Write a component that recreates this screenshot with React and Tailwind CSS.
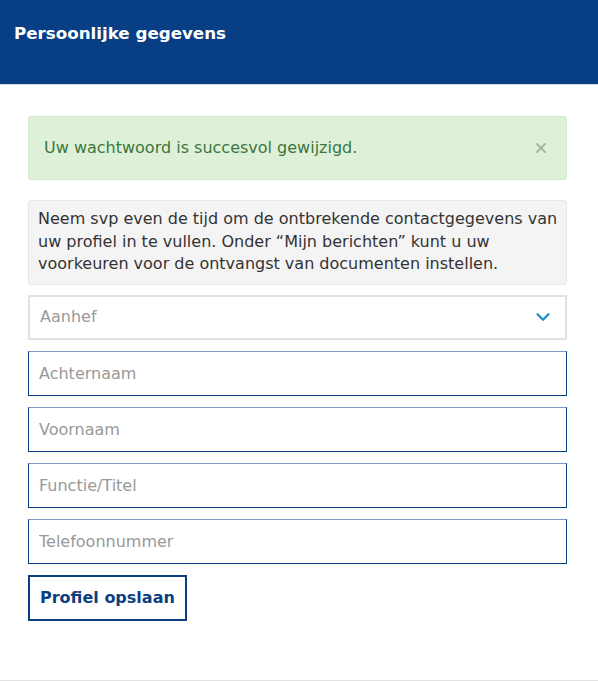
import { ChevronDown, X } from 'lucide-react';

const fields = ['Achternaam', 'Voornaam', 'Functie/Titel', 'Telefoonnummer'];

export default function App() {
  return (
    <div className="min-h-[681px] flex flex-col bg-white font-['DejaVu_Sans',Verdana,sans-serif] border-b border-[#e2e2e2]">
      {/* Header */}
      <header className="h-[85px] bg-[#083f84] border-b border-[#d6dde8] px-[14px] pt-[21px]">
        <h1 className="text-white text-[16.7px] font-bold">Persoonlijke gegevens</h1>
      </header>

      <main className="ml-[28px] w-[539px] pt-[31px] flex flex-col">
        {/* Success alert */}
        <div className="h-[64px] flex items-center justify-between bg-[#dff0d8] border border-[#d0e9c6] rounded-[3px] pl-[15px] pr-[17px]">
          <p className="text-[#3c763d] text-[16px]">Uw wachtwoord is succesvol gewijzigd.</p>
          <X size={16} strokeWidth={3} className="text-[#a5b9a0]" />
        </div>

        {/* Info */}
        <div className="mt-[20px] bg-[#f4f4f4] border border-[#e6e6e6] rounded-[3px] pl-[9px] pr-[3px] pt-[7px] pb-[8px]">
          <p className="text-[#333] text-[16px] leading-[22.5px]">
            Neem svp even de tijd om de ontbrekende contactgegevens van uw profiel in te vullen. Onder “Mijn berichten” kunt u uw voorkeuren voor de ontvangst van documenten instellen.
          </p>
        </div>

        {/* Form */}
        <div className="mt-[10px] flex flex-col gap-[11px]">
          <div className="h-[45px] flex items-center justify-between border-2 border-[#e2e2e2] pl-[10px] pr-[11px]">
            <span className="text-[#999] text-[16px]">Aanhef</span>
            <ChevronDown size={22} strokeWidth={2.5} className="text-[#1f8bd1]" />
          </div>
          {fields.map((f) => (
            <input
              key={f}
              placeholder={f}
              className="h-[45px] px-[10px] text-[16px] text-[#333] placeholder:text-[#999] border border-[#0b3f80] border-t-[#7d99bf] outline-none"
            />
          ))}
          <button className="self-start h-[46px] px-[10px] border-2 border-[#0b3f80] text-[#0b3f80] text-[16px] font-bold">
            Profiel opslaan
          </button>
        </div>
      </main>
    </div>
  );
}
